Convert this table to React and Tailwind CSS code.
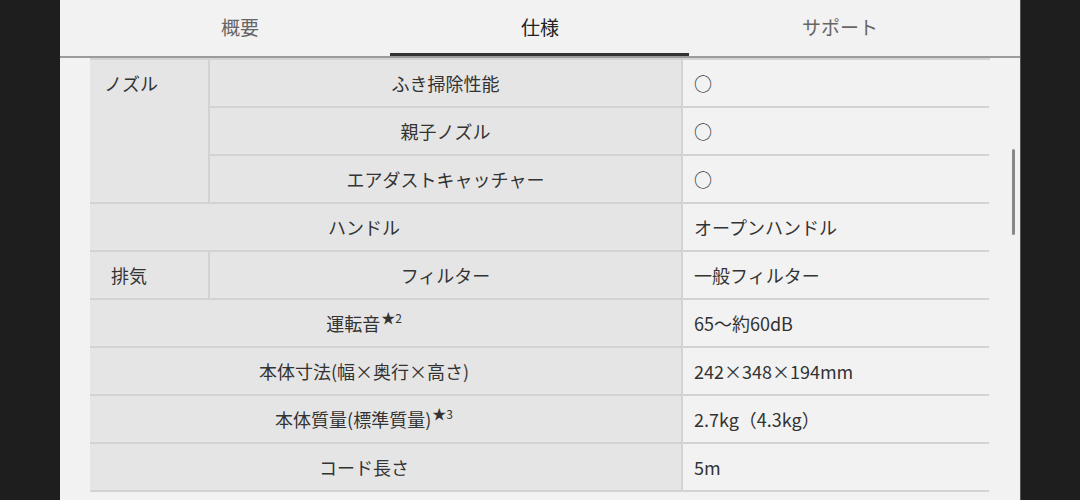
import React from "react";

const font = { fontFamily: '"Noto Sans CJK JP", "Noto Sans", sans-serif' };

function Sup({ n }) {
  return (
    <span className="relative -top-[6px] ml-[1px] text-[14px] leading-none">
      ★<span className="text-[12px]">{n}</span>
    </span>
  );
}

function H({ children, span2 = false, className = "" }) {
  return (
    <div
      className={
        "flex h-[48px] items-center justify-center border-b-2 border-r-2 border-[#d3d3d3] bg-[#e5e5e5] " +
        (span2 ? "col-span-2 pr-[43px] " : "") +
        className
      }
    >
      {children}
    </div>
  );
}

function V({ children }) {
  return (
    <div className="flex h-[48px] items-center border-b-2 border-[#d3d3d3] bg-[#f2f2f2] pl-[11px]">
      {children}
    </div>
  );
}

export default function App() {
  return (
    <div className="flex h-[500px] w-[1080px] overflow-hidden bg-[#1e1e1e]" style={font}>
      <div className="w-[60px] shrink-0 bg-[#1e1e1e]" />
      <div className="relative w-[960px] shrink-0 bg-[#f2f2f2] text-[18px] text-[#333]">
        <div className="flex h-[58px] border-b-2 border-[#9c9c9c] px-[30px]">
          <div className="flex w-[300px] items-center justify-center pb-[2px] text-[19px] text-[#666]">概要</div>
          <div className="relative flex w-[300px] items-center justify-center pb-[2px] text-[19px] text-[#222]">
            仕様
            <div className="absolute bottom-[0px] left-0 h-[3px] w-[299px] bg-[#333]" />
          </div>
          <div className="flex w-[300px] items-center justify-center pb-[2px] text-[19px] text-[#666]">サポート</div>
        </div>
        <div className="px-[30px]">
          <div className="grid grid-cols-[120px_473px_306px] border-t-2 border-[#d3d3d3]">
            <div className="row-span-3 border-b-2 border-r-2 border-[#d3d3d3] bg-[#e5e5e5] pl-[14px]">
              <div className="flex h-[46px] items-center">ノズル</div>
            </div>
            <H>ふき掃除性能</H>
            <V>○</V>
            <H>親子ノズル</H>
            <V>○</V>
            <H>エアダストキャッチャー</H>
            <V>○</V>
            <H span2>ハンドル</H>
            <V>オープンハンドル</V>
            <div className="flex h-[48px] items-center border-b-2 border-r-2 border-[#d3d3d3] bg-[#e5e5e5] pl-[21px]">排気</div>
            <H>フィルター</H>
            <V>一般フィルター</V>
            <H span2>
              運転音<Sup n="2" />
            </H>
            <V>65〜約60dB</V>
            <H span2>本体寸法(幅×奥行×高さ)</H>
            <V>242×348×194mm</V>
            <H span2>
              本体質量(標準質量)<Sup n="3" />
            </H>
            <V>2.7kg（4.3kg）</V>
            <H span2>コード長さ</H>
            <V>5m</V>
          </div>
        </div>
        <div className="absolute left-[952px] top-[149px] h-[86px] w-[3px] rounded-full bg-[#888]" />
      </div>
      <div className="w-[60px] shrink-0 border-l border-[#555] bg-[#1e1e1e]" />
    </div>
  );
}
